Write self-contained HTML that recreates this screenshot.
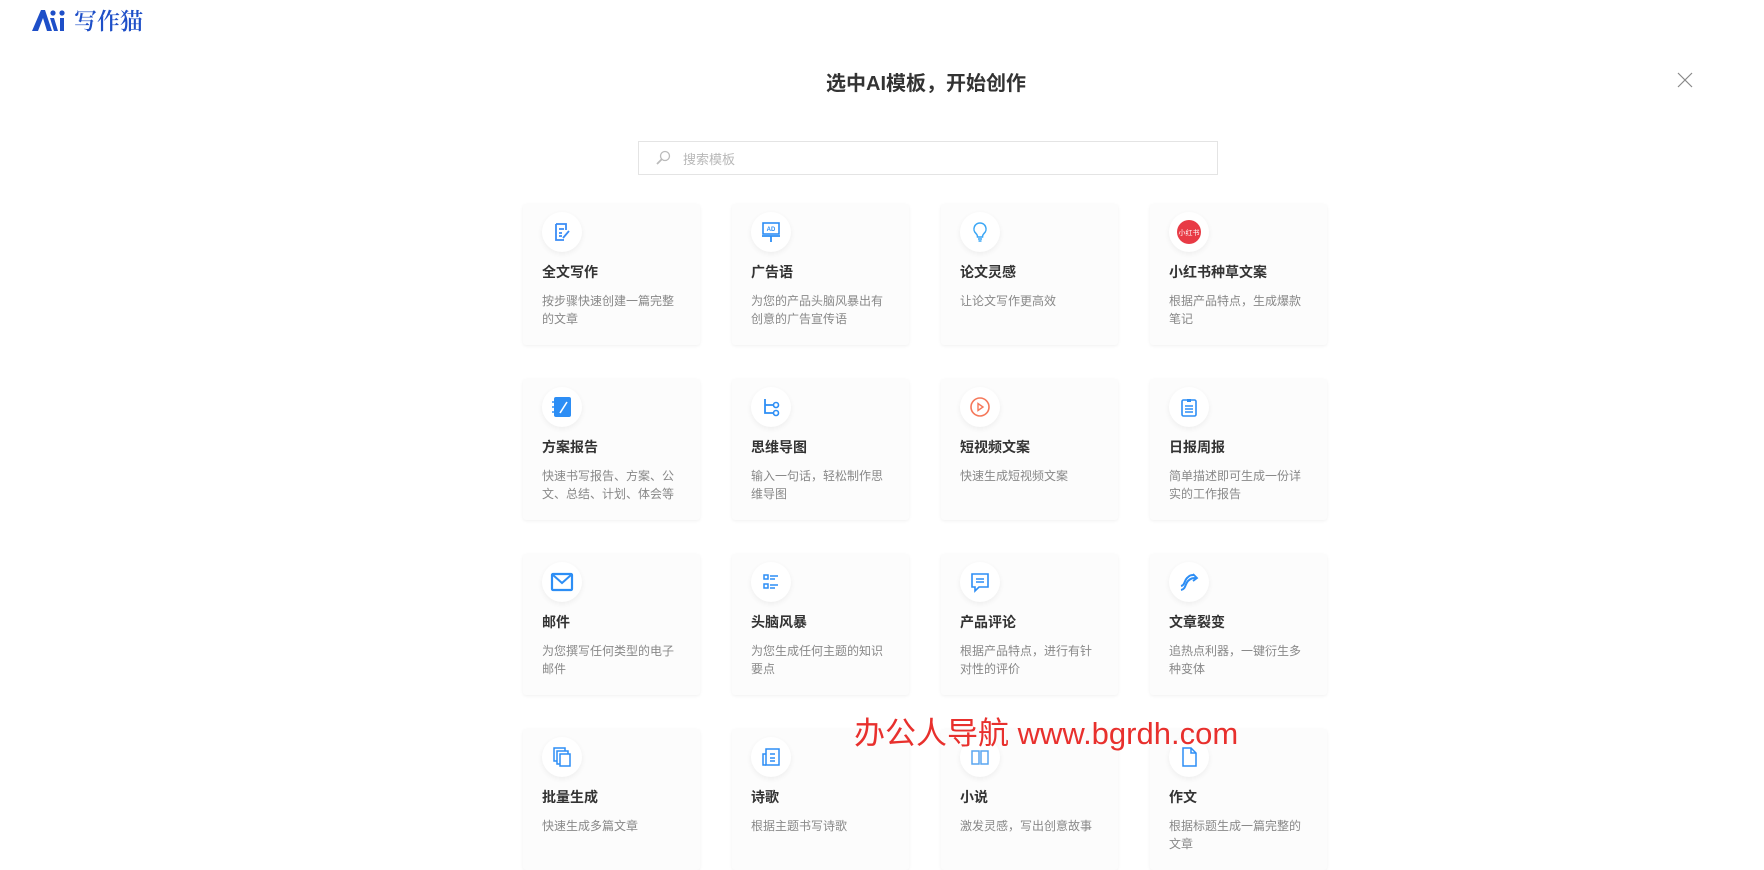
<!DOCTYPE html>
<html><head><meta charset="utf-8"><style>
*{margin:0;padding:0;box-sizing:border-box}
body{width:1764px;height:853px;overflow:hidden;background:#fff;font-family:"Liberation Sans","Noto Sans CJK SC",sans-serif;position:relative}
.logo{position:absolute;left:30px;top:3px;display:flex;align-items:center;gap:6px;color:#1e4fc8;font-family:"Noto Serif CJK SC",serif;font-size:23px;font-weight:600}
.title{position:absolute;left:0;width:1852px;top:67px;text-align:center;font-size:20px;font-weight:bold;color:#333}
.close{position:absolute;left:1677px;top:72px}
.search{position:absolute;left:638px;top:141px;width:580px;height:34px;border:1px solid #e4e4e4;display:flex;align-items:center;padding-left:16px;color:#b8b8b8;font-size:13px}
.card{position:absolute;width:177px;height:141px;background:#fcfcfc;box-shadow:0 1px 3px rgba(0,0,0,.06);border-radius:3px}
.ic{position:absolute;left:19px;top:8px;width:40px;height:40px;border-radius:50%;background:#fff;box-shadow:0 2px 6px rgba(0,0,0,.06);display:flex;align-items:center;justify-content:center}
.t{position:absolute;left:19px;top:58px;font-size:14px;font-weight:bold;color:#333}
.d{position:absolute;left:19px;top:88px;width:136px;font-size:12px;line-height:18px;color:#888}
.wm{position:absolute;left:854px;top:708px;font-size:31px;color:#e8302d}
</style></head><body>
<div class="logo"><svg width="38" height="24" viewBox="0 0 38 24"><path d="M2 23 L11 2 L15 2 L22 23 L17 23 L13 10 L8 23Z" fill="#1e4fc8"/><path d="M24 23 L20 10 L24 10 L28 23Z" fill="#1e4fc8"/><circle cx="23" cy="5" r="2.6" fill="#1e4fc8"/><path d="M30 23 L30 10 L34 10 L34 23Z" fill="#1e4fc8"/><circle cx="32" cy="5" r="2.6" fill="#1e4fc8"/></svg><span>写作猫</span></div>
<div class="title">选中AI模板，开始创作</div>
<svg class="close" width="16" height="16" viewBox="0 0 16 16"><path d="M1 1L15 15M15 1L1 15" stroke="#888" stroke-width="1.2"/></svg>
<div class="search"><svg width="16" height="16" viewBox="0 0 16 16" style="margin-right:12px"><circle cx="10" cy="6" r="4.5" stroke="#bbb" fill="none" stroke-width="1.3"/><path d="M7 9L2 14" stroke="#bbb" stroke-width="1.8"/></svg>搜索模板</div>

<div class="card" style="left:523px;top:204px"><div class="ic"><svg width="22" height="22" viewBox="0 0 22 22"><path d="M5 3h10v6M5 3v16h8" stroke="#3a8cf5" fill="none" stroke-width="1.8"/><path d="M8 8h5M8 12h3M8 15h3M12 17l6-7" stroke="#3a8cf5" stroke-width="1.8"/></svg></div><div class="t">全文写作</div><div class="d">按步骤快速创建一篇完整的文章</div></div>
<div class="card" style="left:732px;top:204px"><div class="ic"><svg width="22" height="22" viewBox="0 0 22 22"><rect x="3" y="2" width="16" height="11" stroke="#2d8ef5" fill="none" stroke-width="1.6"/><text x="11" y="10" font-size="6" fill="#2d8ef5" text-anchor="middle" font-family="Liberation Sans" font-weight="bold">AD</text><path d="M2 15h18M11 15v6" stroke="#2d8ef5" stroke-width="1.8"/></svg></div><div class="t">广告语</div><div class="d">为您的产品头脑风暴出有创意的广告宣传语</div></div>
<div class="card" style="left:941px;top:204px"><div class="ic"><svg width="22" height="22" viewBox="0 0 22 22"><path d="M11 2a6 6 0 0 0-4 10.5c1 1 1.5 2 1.5 3.5h5c0-1.5.5-2.5 1.5-3.5A6 6 0 0 0 11 2z" stroke="#3aa6f5" fill="none" stroke-width="1.5"/><path d="M9 18h4M9.5 20h3" stroke="#3aa6f5" stroke-width="1.5"/></svg></div><div class="t">论文灵感</div><div class="d">让论文写作更高效</div></div>
<div class="card" style="left:1150px;top:204px"><div class="ic"><svg width="26" height="26" viewBox="0 0 26 26"><circle cx="13" cy="13" r="12" fill="#e83a45"/><text x="13" y="16" font-size="7" fill="#fff" text-anchor="middle" font-family="Noto Sans CJK SC">小红书</text></svg></div><div class="t">小红书种草文案</div><div class="d">根据产品特点，生成爆款笔记</div></div>

<div class="card" style="left:523px;top:379px"><div class="ic"><svg width="24" height="24" viewBox="0 0 24 24"><rect x="4" y="2" width="17" height="20" rx="2" fill="#2d8ef5"/><path d="M2 7h4M2 12h4M2 17h4" stroke="#2d8ef5" stroke-width="1.5"/><path d="M10 18l7-11" stroke="#fff" stroke-width="1.6"/></svg></div><div class="t">方案报告</div><div class="d">快速书写报告、方案、公文、总结、计划、体会等</div></div>
<div class="card" style="left:732px;top:379px"><div class="ic"><svg width="22" height="22" viewBox="0 0 22 22"><path d="M5 3v14h9M5 9h9" stroke="#2d8ef5" fill="none" stroke-width="1.8"/><circle cx="16" cy="9" r="2.5" stroke="#2d8ef5" fill="none" stroke-width="1.6"/><circle cx="16" cy="17" r="2.5" stroke="#2d8ef5" fill="none" stroke-width="1.6"/></svg></div><div class="t">思维导图</div><div class="d">输入一句话，轻松制作思维导图</div></div>
<div class="card" style="left:941px;top:379px"><div class="ic"><svg width="22" height="22" viewBox="0 0 22 22"><circle cx="11" cy="11" r="9" stroke="#f5785a" fill="none" stroke-width="1.6"/><path d="M9 7.5v7l5-3.5z" stroke="#f5785a" fill="none" stroke-width="1.4"/></svg></div><div class="t">短视频文案</div><div class="d">快速生成短视频文案</div></div>
<div class="card" style="left:1150px;top:379px"><div class="ic"><svg width="22" height="22" viewBox="0 0 22 22"><rect x="4" y="4" width="14" height="16" rx="1.5" stroke="#2d8ef5" fill="none" stroke-width="1.6"/><path d="M9 3h4v3h-4z" fill="#2d8ef5"/><path d="M7 10h8M7 13h8M7 16h8" stroke="#2d8ef5" stroke-width="1.4"/></svg></div><div class="t">日报周报</div><div class="d">简单描述即可生成一份详实的工作报告</div></div>

<div class="card" style="left:523px;top:554px"><div class="ic"><svg width="24" height="24" viewBox="0 0 24 24"><rect x="2" y="4" width="20" height="16" rx="1" stroke="#2d8ef5" fill="none" stroke-width="2.2"/><path d="M3 5l9 8 9-8" stroke="#2d8ef5" fill="none" stroke-width="2"/></svg></div><div class="t">邮件</div><div class="d">为您撰写任何类型的电子邮件</div></div>
<div class="card" style="left:732px;top:554px"><div class="ic"><svg width="22" height="22" viewBox="0 0 22 22"><rect x="4" y="4" width="4" height="4" stroke="#2d8ef5" fill="none" stroke-width="1.5"/><rect x="4" y="13" width="4" height="4" stroke="#2d8ef5" fill="none" stroke-width="1.5"/><path d="M10 5h8M10 8h5M10 14h8M10 17h5" stroke="#2d8ef5" stroke-width="1.6"/></svg></div><div class="t">头脑风暴</div><div class="d">为您生成任何主题的知识要点</div></div>
<div class="card" style="left:941px;top:554px"><div class="ic"><svg width="22" height="22" viewBox="0 0 22 22"><path d="M3 3h16v13H10l-4 4v-4H3z" stroke="#2d8ef5" fill="none" stroke-width="1.6"/><path d="M7 8h8M7 11h8" stroke="#2d8ef5" stroke-width="1.5"/></svg></div><div class="t">产品评论</div><div class="d">根据产品特点，进行有针对性的评价</div></div>
<div class="card" style="left:1150px;top:554px"><div class="ic"><svg width="22" height="22" viewBox="0 0 22 22"><path d="M3 19c5-1 4-6 7-9s5-3 8-3M3 15c4-1 3-5 6-8s4-3 7-3" stroke="#2d8ef5" fill="none" stroke-width="2"/><path d="M15 3l4 4-4 3" stroke="#2d8ef5" fill="none" stroke-width="1.8"/></svg></div><div class="t">文章裂变</div><div class="d">追热点利器，一键衍生多种变体</div></div>

<div class="card" style="left:523px;top:729px"><div class="ic"><svg width="22" height="22" viewBox="0 0 22 22"><rect x="3" y="2" width="11" height="13" stroke="#2d8ef5" fill="none" stroke-width="1.5"/><rect x="6" y="5" width="11" height="13" stroke="#2d8ef5" fill="#fff" stroke-width="1.5"/><rect x="9" y="8" width="10" height="12" stroke="#2d8ef5" fill="#fff" stroke-width="1.5"/></svg></div><div class="t">批量生成</div><div class="d">快速生成多篇文章</div></div>
<div class="card" style="left:732px;top:729px"><div class="ic"><svg width="22" height="22" viewBox="0 0 22 22"><rect x="6" y="3" width="13" height="16" stroke="#2d8ef5" fill="none" stroke-width="1.5"/><path d="M6 8H3v11h3M10 8h5M10 12h5M10 15h5" stroke="#2d8ef5" fill="none" stroke-width="1.5"/></svg></div><div class="t">诗歌</div><div class="d">根据主题书写诗歌</div></div>
<div class="card" style="left:941px;top:729px"><div class="ic"><svg width="22" height="22" viewBox="0 0 22 22"><path d="M3 5h7v13H3zM12 5h7v13h-7z" stroke="#5aa6f0" fill="none" stroke-width="1.5"/></svg></div><div class="t">小说</div><div class="d">激发灵感，写出创意故事</div></div>
<div class="card" style="left:1150px;top:729px"><div class="ic"><svg width="22" height="22" viewBox="0 0 22 22"><path d="M5 2h8l5 5v13H5z" stroke="#2d8ef5" fill="none" stroke-width="1.5"/><path d="M13 2v5h5" stroke="#2d8ef5" fill="none" stroke-width="1.5"/></svg></div><div class="t">作文</div><div class="d">根据标题生成一篇完整的文章</div></div>

<div class="wm">办公人导航 www.bgrdh.com</div>
</body></html>
